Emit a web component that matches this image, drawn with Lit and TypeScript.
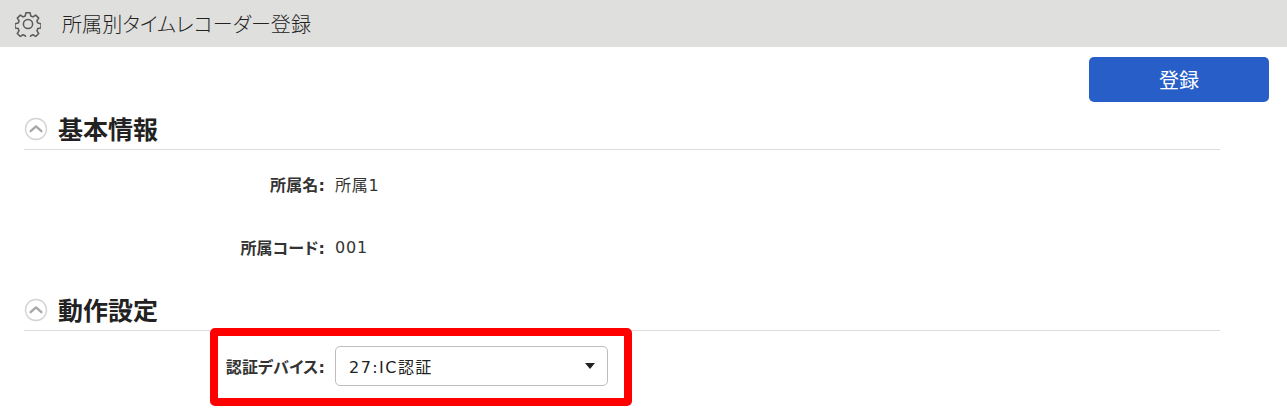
import { LitElement, html, css } from "lit";
import { customElement } from "lit/decorators.js";

const chevron = html`<svg class="chev" viewBox="0 0 24 24" width="24" height="24" aria-hidden="true">
  <circle cx="12" cy="12" r="10.5" fill="#fff" stroke="#d4d4d4" stroke-width="1.4"></circle>
  <path d="M6.6 14.2 12 9.4l5.4 4.8" fill="none" stroke="#a8a8a8" stroke-width="2.4" stroke-linecap="round" stroke-linejoin="round"></path>
</svg>`;

const gear = html`<svg class="gear" viewBox="0 0 26 26" width="26" height="26" aria-hidden="true" fill="none" stroke="#5a5a5a" stroke-width="1.5" stroke-linejoin="round">
  <path d="M10.9 1.8h4.2l.7 3.2 2.1.9 2.8-1.8 3 3-1.8 2.8.9 2.1 3.2.7v4.2l-3.2.7-.9 2.1 1.8 2.8-3 3-2.8-1.8-2.1.9-.7 3.2h-4.2l-.7-3.2-2.1-.9-2.8 1.8-3-3 1.8-2.8-.9-2.1-3.2-.7v-4.2l3.2-.7.9-2.1-1.8-2.8 3-3 2.8 1.8 2.1-.9z"></path>
  <circle cx="13" cy="13" r="4.6"></circle>
</svg>`;

@customElement("app-root")
export class AppRoot extends LitElement {
  static styles = css`
    :host {
      display: block;
      position: relative;
      width: 1287px;
      height: 415px;
      overflow: hidden;
      background: #fff;
      color: #333;
      font-family: "DejaVu Sans", "Noto Sans CJK JP", sans-serif;
      font-feature-settings: "palt";
      font-size: 16px;
    }
    .topbar {
      display: flex;
      align-items: center;
      height: 47px;
      padding-left: 15px;
      gap: 21px;
      background: #dfdfdd;
      font-size: 20px;
      font-weight: 300;
      color: #222;
      letter-spacing: 0.1px;
    }
    .gear { flex: none; }
    .actions {
      display: flex;
      justify-content: flex-end;
      padding: 10px 18px 0 0;
    }
    .save {
      width: 180px;
      height: 45px;
      border: 0;
      border-radius: 5px;
      background: #285ec8;
      color: #fff;
      font: inherit;
      font-size: 20px;
      font-weight: 400;
    }
    .section { width: 1196px; margin-left: 24px; }
    .head {
      display: flex;
      align-items: center;
      gap: 10px;
      height: 48px;
      padding-top: 4px;
      border-bottom: 1px solid #dcdcdc;
      box-sizing: border-box;
      font-size: 25px;
      font-weight: 700;
      color: #222;
    }
    .chev { flex: none; margin-top: 3px; }
    .row {
      display: grid;
      grid-template-columns: 301px 1fr;
      column-gap: 10px;
      align-items: center;
      height: 62px;
    }
    .label {
      text-align: right;
      font-weight: 700;
      font-size: 16px;
      letter-spacing: 0.15px;
      color: #333;
    }
    .value { color: #333; letter-spacing: 0.8px; }
    .rows { padding-top: 3px; }
    .rows .row + .row { margin-top: 1px; }
    .rows2 { padding-top: 15px; }
    .row.sel { height: 40px; }
    .select {
      display: flex;
      align-items: center;
      justify-content: space-between;
      box-sizing: border-box;
      width: 273px;
      height: 40px;
      padding: 0 12px 0 13px;
      border: 1px solid #bdbdbd;
      border-radius: 5px;
      color: #222;
      letter-spacing: 1.45px;
    }
    .caret {
      width: 0;
      height: 0;
      border-left: 5px solid transparent;
      border-right: 5px solid transparent;
      border-top: 6px solid #222;
    }
    .gap2 { margin-top: 5px; }
    .highlight {
      position: absolute;
      left: 210px;
      top: 328px;
      width: 422px;
      height: 78px;
      box-sizing: border-box;
      border: 8px solid #f00;
      border-radius: 5px;
      pointer-events: none;
    }
  `;

  render() {
    return html`
      <div class="topbar">${gear}<span>所属別タイムレコーダー登録</span></div>
      <div class="actions"><button class="save">登録</button></div>
      <section class="section">
        <div class="head">${chevron}<span>基本情報</span></div>
        <div class="rows">
          <div class="row"><div class="label">所属名:</div><div class="value">所属1</div></div>
          <div class="row"><div class="label">所属コード:</div><div class="value">001</div></div>
        </div>
      </section>
      <section class="section gap2">
        <div class="head">${chevron}<span>動作設定</span></div>
        <div class="rows2">
          <div class="row sel">
            <div class="label">認証デバイス:</div>
            <div class="select"><span>27:IC認証</span><span class="caret"></span></div>
          </div>
        </div>
      </section>
      <div class="highlight"></div>
    `;
  }
}
